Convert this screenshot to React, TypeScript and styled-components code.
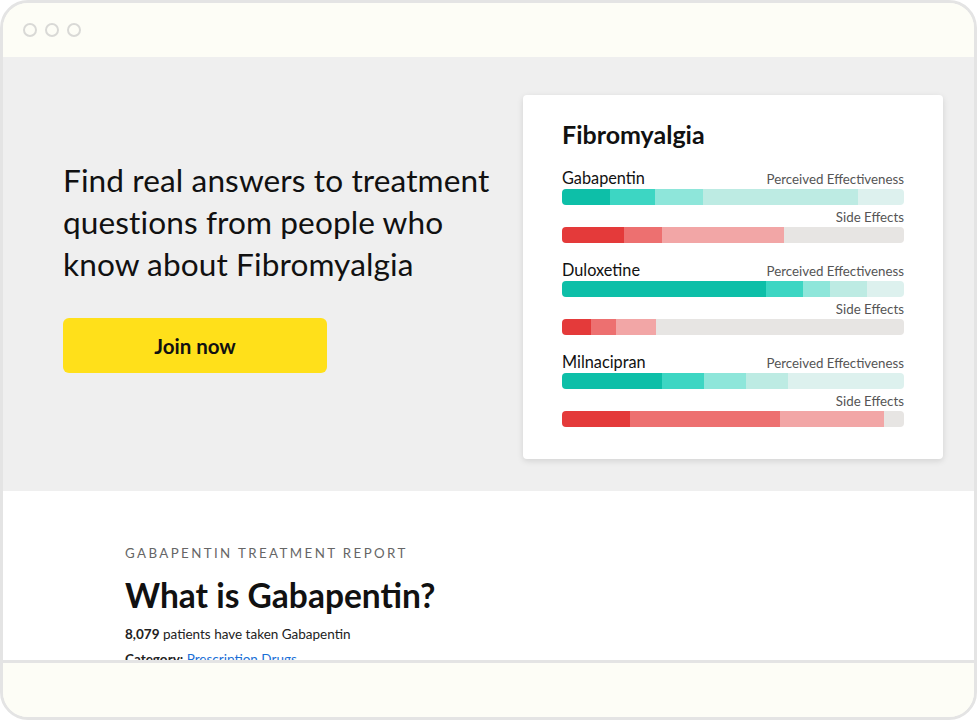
import React from 'react';
import styled, { createGlobalStyle } from 'styled-components';

const GlobalStyle = createGlobalStyle`
  * { box-sizing: border-box; }
  body {
    margin: 0;
    background: #ffffff;
    font-family: Lato, "Noto Sans", sans-serif;
    color: #111;
  }
`;

type Segment = { width: number; color: string };
type Drug = { name: string; effectiveness: Segment[]; sideEffects: Segment[] };

const TEAL = ['#0dbfa8', '#3dd6c3', '#8ee6da', '#bdebe3', '#ddf1ee'];
const RED = ['#e43a3a', '#ed7070', '#f2a6a6', '#e7e5e3'];

const seg = (widths: number[], colors: string[]): Segment[] =>
  widths.map((w, i) => ({ width: w, color: colors[i] }));

const drugs: Drug[] = [
  {
    name: 'Gabapentin',
    effectiveness: seg([48, 45, 48, 155, 46], TEAL),
    sideEffects: seg([62, 38, 122, 120], RED),
  },
  {
    name: 'Duloxetine',
    effectiveness: seg([204, 37, 27, 37, 37], TEAL),
    sideEffects: seg([29, 25, 40, 248], RED),
  },
  {
    name: 'Milnacipran',
    effectiveness: seg([100, 42, 42, 42, 116], TEAL),
    sideEffects: seg([68, 150, 104, 20], RED),
  },
];

const StackedBar = ({ segments }: { segments: Segment[] }) => (
  <Bar>
    {segments.map((s, i) => (
      <BarPart key={i} style={{ width: s.width, background: s.color }} />
    ))}
  </Bar>
);

const App = () => (
  <>
    <GlobalStyle />
    <Frame>
      <TopBar>
        <Dot />
        <Dot />
        <Dot />
      </TopBar>
      <Hero>
        <HeroText>
          <Headline>
            Find real answers to treatment questions from people who know
            about Fibromyalgia
          </Headline>
          <JoinButton>Join now</JoinButton>
        </HeroText>
        <Card>
          <CardTitle>Fibromyalgia</CardTitle>
          {drugs.map((d) => (
            <DrugBlock key={d.name}>
              <LabelRow>
                <DrugName>{d.name}</DrugName>
                <Metric>Perceived Effectiveness</Metric>
              </LabelRow>
              <StackedBar segments={d.effectiveness} />
              <LabelRow>
                <span />
                <Metric>Side Effects</Metric>
              </LabelRow>
              <StackedBar segments={d.sideEffects} />
            </DrugBlock>
          ))}
        </Card>
      </Hero>
      <Report>
        <Eyebrow>Gabapentin Treatment Report</Eyebrow>
        <ReportTitle>What is Gabapentin?</ReportTitle>
        <Fact>
          <strong>8,079</strong> patients have taken Gabapentin
        </Fact>
        <Fact>
          <strong>Category:</strong> <LinkText href="#">Prescription Drugs</LinkText>
        </Fact>
      </Report>
      <BottomBar />
    </Frame>
  </>
);

const Frame = styled.div`
  width: 977px;
  height: 720px;
  border: 3px solid #e4e4e4;
  border-radius: 28px;
  overflow: hidden;
  display: flex;
  flex-direction: column;
  background: #fdfdf6;
`;

const TopBar = styled.div`
  height: 54px;
  flex-shrink: 0;
  display: flex;
  align-items: center;
  gap: 8px;
  padding: 0 0 0 20px;
  background: #fdfdf6;
`;

const Dot = styled.span`
  width: 14px;
  height: 14px;
  border: 2px solid #d9d9d6;
  border-radius: 50%;
`;

const Hero = styled.section`
  height: 434px;
  flex-shrink: 0;
  background: #efefef;
  display: flex;
  justify-content: space-between;
  padding: 38px 31px 0 60px;
`;

const HeroText = styled.div`
  width: 450px;
  padding-top: 64px;
`;

const Headline = styled.h1`
  margin: 0;
  font-size: 31.6px;
  font-weight: 400;
  line-height: 42px;
  letter-spacing: 0.1px;
  color: #111;
`;

const JoinButton = styled.button`
  margin-top: 33px;
  width: 264px;
  height: 55px;
  border: none;
  border-radius: 6px;
  background: #ffe01a;
  font-family: inherit;
  font-size: 20.5px;
  font-weight: 700;
  color: #111;
  cursor: pointer;
`;

const Card = styled.div`
  width: 420px;
  height: 364px;
  background: #ffffff;
  border-radius: 4px;
  box-shadow: 0 2px 6px rgba(0, 0, 0, 0.12);
  padding: 24px 39px 0 39px;
`;

const CardTitle = styled.h2`
  margin: 0 0 18px;
  font-size: 25px;
  font-weight: 700;
  line-height: 30px;
  color: #111;
`;

const DrugBlock = styled.div`
  margin-bottom: 16px;
`;

const LabelRow = styled.div`
  display: flex;
  justify-content: space-between;
  align-items: flex-end;
  height: 22px;
  padding-bottom: 2px;
`;

const DrugName = styled.span`
  font-size: 16.3px;
  color: #111;
`;

const Metric = styled.span`
  font-size: 13.3px;
  color: #555;
`;

const Bar = styled.div`
  display: flex;
  height: 16px;
  border-radius: 4px;
  overflow: hidden;
`;

const BarPart = styled.div`
  height: 100%;
  flex-shrink: 0;
`;

const Report = styled.section`
  height: 169px;
  flex-shrink: 0;
  overflow: hidden;
  background: #ffffff;
  padding: 54px 0 0 122px;
`;

const Eyebrow = styled.div`
  font-size: 13.3px;
  letter-spacing: 2.4px;
  text-transform: uppercase;
  color: #666;
`;

const ReportTitle = styled.h2`
  margin: 14px 0 12px;
  font-size: 33.5px;
  font-weight: 700;
  line-height: 40px;
  color: #111;
`;

const Fact = styled.p`
  margin: 0 0 10px;
  font-size: 13.5px;
  line-height: 15px;
  color: #222;
`;

const LinkText = styled.a`
  color: #1a6fd6;
  text-decoration: underline;
`;

const BottomBar = styled.div`
  flex: 1;
  border-top: 3px solid #e4e4e4;
  background: #fdfdf6;
`;

export default App;
